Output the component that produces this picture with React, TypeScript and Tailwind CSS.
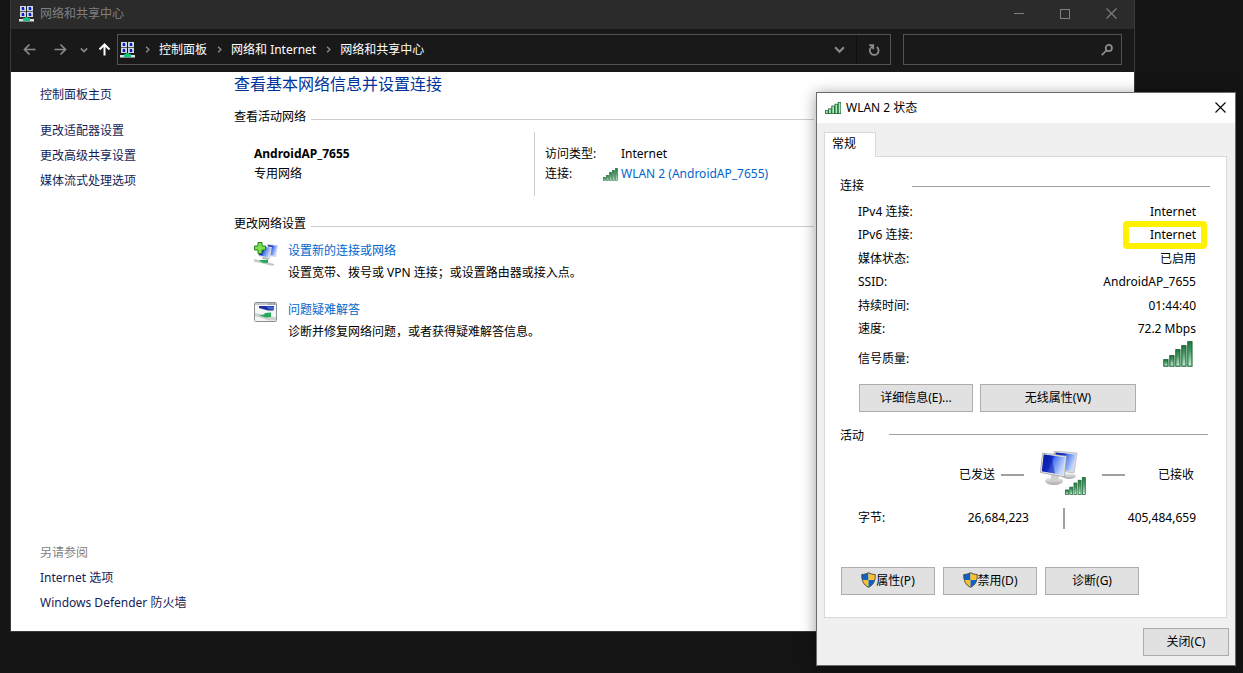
import React from 'react';
import clsx from 'clsx';

const SIDEBAR_LINKS = ['更改适配器设置', '更改高级共享设置', '媒体流式处理选项'];
const SEE_ALSO_LINKS = ['Internet 选项', 'Windows Defender 防火墙'];
const BREADCRUMBS = ['控制面板', '网络和 Internet', '网络和共享中心'];

const CONNECTION_ROWS = [
  { label: 'IPv4 连接:', value: 'Internet' },
  { label: 'IPv6 连接:', value: 'Internet', marked: true },
  { label: '媒体状态:', value: '已启用' },
  { label: 'SSID:', value: 'AndroidAP_7655' },
  { label: '持续时间:', value: '01:44:40' },
  { label: '速度:', value: '72.2 Mbps' },
];

const SIGNAL_BARS = [
  { x: 0, h: 8 },
  { x: 6, h: 12 },
  { x: 12, h: 18 },
  { x: 18, h: 22 },
  { x: 24, h: 26 },
];

/** Four small monitors on a green network cable. */
const NetworkCenterIcon: React.FC = () => (
  <svg
    width="15"
    height="16"
    viewBox="0 0 15 16"
    shapeRendering="crispEdges"
    className="shrink-0"
    aria-hidden="true"
  >
    {[
      [1, 0],
      [8, 0],
      [1, 6],
      [8, 6],
    ].map(([x, y]) => (
      <g key={`${x}-${y}`}>
        <rect x={x} y={y} width="6" height="5" fill="#d3d7dc" />
        <rect x={x + 1} y={y + 1} width="4" height="3" fill="#8fa4ee" />
        <rect x={x + 2} y={y + 1} width="2" height="3" fill="#0a1fc0" />
        <rect x={x + 4} y={y + 1} width="1" height="1" fill="#d3d7dc" />
      </g>
    ))}
    <rect x="1" y="5" width="6" height="1" fill="#565b61" />
    <rect x="8" y="5" width="6" height="1" fill="#565b61" />
    <rect x="6" y="11" width="3" height="2" fill="#0fae6a" />
    <rect x="0" y="13" width="15" height="2" fill="#dde0e3" />
    <rect x="4" y="12" width="7" height="3" fill="#12c47a" />
    <rect x="0" y="15" width="15" height="1" fill="#7d8387" />
  </svg>
);

const SignalIcon: React.FC<{
  width: number;
  height: number;
  flat?: boolean;
}> = ({ width, height, flat }) => (
  <svg
    width={width}
    height={height}
    viewBox="0 0 30 26"
    preserveAspectRatio="none"
    className="shrink-0"
    aria-hidden="true"
  >
    <defs>
      <linearGradient id="signal-bar" x1="0" y1="0" x2="0" y2="1">
        <stop offset="0" stopColor="#1f7a40" />
        <stop offset="0.4" stopColor="#4f9d69" />
        <stop offset="1" stopColor="#c4f3d2" />
      </linearGradient>
    </defs>
    {SIGNAL_BARS.map(({ x, h }) => (
      <rect
        key={x}
        x={x + 0.8}
        y={26.7 - h}
        width={flat ? 5 : 4.2}
        height={h - 1.5}
        fill={flat ? '#a9f0bd' : 'url(#signal-bar)'}
        stroke="#1d6437"
        strokeWidth={flat ? 1.7 : 1.1}
      />
    ))}
  </svg>
);

const ScreenDefs: React.FC = () => (
  <defs>
    <linearGradient id="screen" x1="0" y1="0" x2="1" y2="0.4">
      <stop offset="0" stopColor="#0717a0" />
      <stop offset="0.45" stopColor="#1230d8" />
      <stop offset="0.55" stopColor="#4f76f0" />
      <stop offset="1" stopColor="#c5d8ff" />
    </linearGradient>
    <linearGradient id="stand" x1="0" y1="0" x2="0" y2="1">
      <stop offset="0" stopColor="#f4f4f4" />
      <stop offset="1" stopColor="#a8a8a8" />
    </linearGradient>
  </defs>
);

/** Two tilted monitors, the adapter picture of the status dialog. */
const MonitorsIcon: React.FC = () => (
  <svg width="38" height="36" viewBox="0 0 38 36" aria-hidden="true">
    <ScreenDefs />
    <ellipse cx="29" cy="25" rx="7" ry="3" fill="url(#stand)" />
    <path d="M14 0 L37 2 L34 22 L14 19Z" fill="#dedede" stroke="#a6a6a6" strokeWidth="0.6" />
    <path d="M15.500 1.500 L35.500 3.500 L32.700 20.200 L16 18Z" fill="url(#screen)" />
    <ellipse cx="14" cy="30" rx="9" ry="4" fill="url(#stand)" />
    <path d="M11 22 L19 24 L18 30 L11 29Z" fill="#cfcfcf" />
    <path d="M2.500 2 L26.500 5 L24.500 26 L0.400 21.500Z" fill="#e2e2e2" stroke="#8f8f8f" strokeWidth="0.6" />
    <path d="M3.800 3.500 L25 6.300 L23 24 L1.900 20.200Z" fill="url(#screen)" />
    <path d="M3.800 3.500 L11 4.500 L15 22.500 L1.900 20.200Z" fill="#0b1da0" opacity="0.5" />
  </svg>
);

const NewConnectionIcon: React.FC = () => (
  <svg width="24" height="24" viewBox="0 0 24 24" className="mt-[2px] shrink-0" aria-hidden="true">
    <ScreenDefs />
    <path d="M13 2 L24 3 L22 15 L13 14Z" fill="#d4d8e6" />
    <path d="M14 3 L23 4 L21 13.500 L14 13Z" fill="url(#screen)" />
    <path d="M5 3 L18 5 L16 17 L4 14Z" fill="#d8d8d8" />
    <path d="M6 4 L17 6 L15 15.500 L5 13Z" fill="url(#screen)" />
    <path d="M9 15 L14 16 L15 18 L8 17Z" fill="#b6b6b6" />
    <path d="M0 17 L6 18.500 L20 22 L20 23.500 L17 23.500 L0 19.500Z" fill="#c3c8c4" />
    <path d="M5 18 L14 18 L14 21 L8 20.500Z" fill="#1fae55" />
    <path d="M4 0.500 H8 V4 H11.500 V8 H8 V11.500 H4 V8 H0.500 V4 H4Z" fill="#7be24f" stroke="#22851a" strokeWidth="1" />
  </svg>
);

const TroubleshootIcon: React.FC = () => (
  <svg width="24" height="22" viewBox="0 0 24 22" className="mt-[3px] shrink-0" aria-hidden="true">
    <rect x="0.500" y="0.500" width="22" height="19" rx="1" fill="#f4f6f8" stroke="#8b9096" />
    <rect x="1" y="1" width="21" height="2" fill="#c4c9cf" />
    <path d="M14.500 2h1.500M17 2h1.500M19.500 2h1.500" stroke="#5f6872" strokeWidth="1" />
    <path d="M5 4 L20 4 L19.500 8.500 L14 8.500 L5 6Z" fill="#1b2f9f" />
    <path d="M12 4.500 L20 4.500 L19.400 7.500 L15 7.500Z" fill="#4565d8" />
    <path d="M1 11 L6 12 L22 15.500 L22 18.500 L15 18.500 L1 14Z" fill="#ccd3cf" />
    <path d="M5 13.500 L10 12.500 L11 11 L17 10.500 L17 15 L12 15.500Z" fill="#25a956" />
  </svg>
);

const ShieldIcon: React.FC = () => (
  <svg width="15" height="16" viewBox="0 0 15 16" className="mb-[2px] shrink-0" aria-hidden="true">
    <clipPath id="shield">
      <path d="M7.500 0.500 C9.500 1.800 12 2.400 14.300 2.400 C14.600 8.500 12.500 13 7.500 15.500 C2.500 13 0.400 8.500 0.700 2.400 C3 2.400 5.500 1.800 7.500 0.500Z" />
    </clipPath>
    <g clipPath="url(#shield)">
      <rect width="7.500" height="8" fill="#0b63c4" />
      <rect x="7.500" width="7.500" height="8" fill="#fbc02f" />
      <rect y="8" width="7.500" height="8" fill="#fbc02f" />
      <rect x="7.500" y="8" width="7.500" height="8" fill="#0b63c4" />
    </g>
    <path
      d="M7.500 0.700 C9.500 1.900 12 2.500 14.200 2.500 C14.500 8.500 12.500 12.900 7.500 15.300 C2.500 12.900 0.500 8.500 0.800 2.500 C3 2.500 5.500 1.900 7.500 0.700Z"
      fill="none"
      stroke="#4d4d4d"
      strokeWidth="1"
    />
  </svg>
);

const ArrowIcon: React.FC<{ direction: 'left' | 'right' | 'up' }> = ({
  direction,
}) => (
  <svg
    width="13"
    height="13"
    viewBox="0 0 13 13"
    fill="none"
    stroke="currentColor"
    strokeWidth={direction === 'up' ? 2 : 1.7}
    className={clsx(
      direction === 'right' && 'rotate-180',
      direction === 'up' && 'rotate-90'
    )}
    aria-hidden="true"
  >
    <path d="M12.500 6.500H1.500M6.500 1.500L1.500 6.500L6.500 11.500" />
  </svg>
);

const ChevronIcon: React.FC<{ size: number; right?: boolean }> = ({
  size,
  right,
}) => (
  <svg
    width={size}
    height={size}
    viewBox="0 0 10 10"
    fill="none"
    stroke="currentColor"
    strokeWidth="2"
    className={clsx('shrink-0', right && '-rotate-90')}
    aria-hidden="true"
  >
    <path d="M1 3L5 7L9 3" />
  </svg>
);

const CloseIcon: React.FC = () => (
  <svg width="11" height="11" viewBox="0 0 11 11" stroke="currentColor" strokeWidth="1.1" aria-hidden="true">
    <path d="M0.500 0.500L10.500 10.500M10.500 0.500L0.500 10.500" />
  </svg>
);

const DialogButton: React.FC<{
  className?: string;
  children: React.ReactNode;
}> = ({ className, children }) => (
  <button
    type="button"
    className={clsx(
      'flex h-7 items-center justify-center border border-[#adadad] bg-[#e1e1e1] hover:border-[#0078d7] hover:bg-[#e5f1fb]',
      className
    )}
  >
    {children}
  </button>
);

const SectionTitle: React.FC<{ children: React.ReactNode }> = ({
  children,
}) => (
  <div className="flex items-center gap-[5px]">
    <h2>{children}</h2>
    <div className="mt-1 h-px flex-1 bg-[#cccccc]" />
  </div>
);

const TitleBar: React.FC = () => (
  <header className="flex h-[29px] items-start bg-[#2b2b2b] pl-2 text-[#808080]">
    <div className="flex h-[27px] flex-1 items-center gap-[6px]">
      <NetworkCenterIcon />
      <h1>网络和共享中心</h1>
    </div>
    <button type="button" aria-label="最小化" className="flex h-[27px] w-[46px] items-center justify-center">
      <span className="h-px w-[10px] bg-current" />
    </button>
    <button type="button" aria-label="最大化" className="flex h-[27px] w-[46px] items-center justify-center">
      <span className="h-[10px] w-[10px] border border-current" />
    </button>
    <button type="button" aria-label="关闭" className="flex h-[27px] w-[46px] items-center justify-center">
      <CloseIcon />
    </button>
  </header>
);

const AddressBar: React.FC = () => (
  <nav className="flex h-[43px] items-center bg-[#191919] px-3 pb-[2px] text-[#8a8a8a]">
    <div className="flex w-[94px] items-center justify-between pr-[6px]">
      <button type="button" aria-label="后退">
        <ArrowIcon direction="left" />
      </button>
      <button type="button" aria-label="前进" className="pl-2">
        <ArrowIcon direction="right" />
      </button>
      <button type="button" aria-label="最近的位置" className="pl-1">
        <ChevronIcon size={8} />
      </button>
      <button type="button" aria-label="向上" className="text-white">
        <ArrowIcon direction="up" />
      </button>
    </div>
    <div className="flex h-[31px] flex-1 items-center border border-[#535353] pl-[2px]">
      <NetworkCenterIcon />
      <ol className="flex flex-1 items-center">
        {BREADCRUMBS.map((crumb) => (
          <li key={crumb} className="flex items-center">
            <span className="flex w-6 justify-center">
              <ChevronIcon size={7} right />
            </span>
            <a href="#" className="text-white">
              {crumb}
            </a>
          </li>
        ))}
      </ol>
      <button type="button" aria-label="以前的位置" className="flex w-[34px] justify-center">
        <ChevronIcon size={11} />
      </button>
      <button
        type="button"
        aria-label="刷新"
        className="flex h-full w-[34px] items-center justify-center border-l border-[#111111]"
      >
        <svg width="12" height="12" viewBox="0 0 12 12" fill="none" stroke="currentColor" strokeWidth="1.8" aria-hidden="true">
          <path d="M8.800 3A4.400 4.400 0 1 1 4.800 2.400M1.200 1.200H5.200V5.200" />
        </svg>
      </button>
    </div>
    <div className="ml-3 flex h-[31px] w-[219px] items-center border border-[#535353] pr-2">
      <input type="search" aria-label="搜索控制面板" className="min-w-0 flex-1 bg-transparent px-2 text-white outline-none" />
      <svg width="12" height="12" viewBox="0 0 12 12" fill="none" stroke="currentColor" strokeWidth="1.8" aria-hidden="true">
        <circle cx="7.800" cy="4" r="3.100" />
        <path d="M5.500 6.300L0.700 11.200" />
      </svg>
    </div>
  </nav>
);

const Sidebar: React.FC = () => (
  <aside className="flex w-[223px] shrink-0 flex-col justify-between pt-[13px] pb-4 pl-[29px] text-[#151c55]">
    <div>
      <a href="#" className="block leading-5">
        控制面板主页
      </a>
      <ul className="mt-[13px]">
        {SIDEBAR_LINKS.map((link) => (
          <li key={link} className="leading-[25px]">
            <a href="#">{link}</a>
          </li>
        ))}
      </ul>
    </div>
    <div className="leading-[25px]">
      <h2 className="text-[#808080]">另请参阅</h2>
      <ul>
        {SEE_ALSO_LINKS.map((link) => (
          <li key={link}>
            <a href="#">{link}</a>
          </li>
        ))}
      </ul>
    </div>
  </aside>
);

const NetworkOverview: React.FC = () => (
  <main className="max-w-[580px] flex-1 leading-5">
    <p className="text-base leading-6 text-[#003399]">
      查看基本网络信息并设置连接
    </p>
    <div className="mt-[11px]">
      <SectionTitle>查看活动网络</SectionTitle>
    </div>
    <div className="mt-[5px] flex h-16 pl-5">
      <div className="w-[280px] pt-3">
        <p className="font-bold">AndroidAP_7655</p>
        <p>专用网络</p>
      </div>
      <dl className="grid grid-cols-[58px_1fr] content-start border-l border-[#cccccc] pt-3 pl-[10px]">
        <dt>访问类型:</dt>
        <dd className="pl-[18px]">Internet</dd>
        <dt>连接:</dt>
        <dd className="flex items-center gap-[3px]">
          <SignalIcon width={15} height={13} />
          <a href="#" className="text-[#0066cc]">
            WLAN 2 (AndroidAP_7655)
          </a>
        </dd>
      </dl>
    </div>
    <div className="mt-[18px]">
      <SectionTitle>更改网络设置</SectionTitle>
    </div>
    <ul className="mt-[6px] space-y-[15px] pl-5">
      <li className="flex gap-[10px]">
        <NewConnectionIcon />
        <div className="leading-[22px]">
          <a href="#" className="text-[#0066cc]">
            设置新的连接或网络
          </a>
          <p>设置宽带、拨号或 VPN 连接；或设置路由器或接入点。</p>
        </div>
      </li>
      <li className="flex gap-[10px]">
        <TroubleshootIcon />
        <div className="leading-[22px]">
          <a href="#" className="text-[#0066cc]">
            问题疑难解答
          </a>
          <p>诊断并修复网络问题，或者获得疑难解答信息。</p>
        </div>
      </li>
    </ul>
  </main>
);

const WlanStatusDialog: React.FC = () => (
  <section
    role="dialog"
    aria-labelledby="wlan-title"
    className="absolute top-[92px] right-[7px] w-[420px] border border-[#6b6b6b] bg-[#f0f0f0] shadow-[0_2px_14px_rgba(0,0,0,0.4)]"
  >
    <header className="flex h-[30px] items-center bg-white pr-[9px] pb-px pl-2">
      <SignalIcon width={16} height={12} flat />
      <h2 id="wlan-title" className="flex-1 pl-[5px]">
        WLAN 2 状态
      </h2>
      <button type="button" aria-label="关闭窗口">
        <CloseIcon />
      </button>
    </header>

    <div className="pt-[9px] pr-2 pb-[9px] pl-[7px]">
      <div role="tablist" className="flex">
        <button
          type="button"
          role="tab"
          aria-selected="true"
          className="relative z-10 -mb-px h-[25px] w-[52px] border border-b-0 border-[#d9d9d9] bg-white pr-3 pb-[2px]"
        >
          常规
        </button>
      </div>
      <div role="tabpanel" className="border border-[#d9d9d9] bg-white px-[15px] pt-[19px] pb-[22px]">
        <div className="flex items-center pr-px">
          <h3 className="w-[72px] leading-5">连接</h3>
          <div className="h-px flex-1 bg-[#a0a0a0]" />
        </div>
        <dl className="mt-[6px] pr-[15px] pl-[18px]">
          <div className="flex h-[137px] flex-col justify-between">
            {CONNECTION_ROWS.map(({ label, value, marked }) => (
              <div key={label} className="flex h-5 items-center justify-between">
                <dt>{label}</dt>
                <dd className="relative">
                  {value}
                  {marked && (
                    <span className="absolute -inset-y-[6px] -right-[11px] -left-[27px] rounded-sm border-[6px] border-[#fff200]" />
                  )}
                </dd>
              </div>
            ))}
          </div>
          <div className="flex h-10 items-center justify-between">
            <dt>信号质量:</dt>
            <dd className="pr-[3px] pb-[10px]">
              <SignalIcon width={30} height={26} />
            </dd>
          </div>
        </dl>
        <div className="mt-[5px] flex gap-[7px] pl-[19px]">
          <DialogButton className="w-[114px]">详细信息(E)...</DialogButton>
          <DialogButton className="w-[156px]">无线属性(W)</DialogButton>
        </div>

        <div className="mt-[10px] flex items-center pr-[3px]">
          <h3 className="w-[49px] pt-1 leading-5">活动</h3>
          <div className="h-px flex-1 bg-[#a0a0a0]" />
        </div>
        <div className="mt-[5px] flex h-12 items-center pr-[17px] pl-[119px]">
          <span className="pr-[6px]">已发送</span>
          <span className="h-[2px] w-[23px] bg-[#a0a0a0]" />
          <span className="relative mx-4 mb-1 h-[44px] w-[46px]">
            <MonitorsIcon />
            <span className="absolute right-0 bottom-0">
              <SignalIcon width={21} height={18} />
            </span>
          </span>
          <span className="h-[2px] w-[23px] bg-[#a0a0a0]" />
          <span className="flex-1 text-right">已接收</span>
        </div>
        <div className="mt-2 flex h-[22px] items-center pr-[15px] pl-[18px]">
          <span className="w-[60px]">字节:</span>
          <span className="w-[111px] text-right">26,684,223</span>
          <span className="ml-[34px] h-[21px] w-[2px] bg-[#a0a0a0]" />
          <span className="flex-1 text-right">405,484,659</span>
        </div>

        <div className="mt-[38px] flex gap-2 pl-px">
          <DialogButton className="w-[94px]">
            <ShieldIcon />
            属性(P)
          </DialogButton>
          <DialogButton className="w-[94px]">
            <ShieldIcon />
            禁用(D)
          </DialogButton>
          <DialogButton className="w-[94px]">诊断(G)</DialogButton>
        </div>
      </div>
      <div className="-mr-[2px] mt-[10px] flex justify-end">
        <DialogButton className="w-[86px]">关闭(C)</DialogButton>
      </div>
    </div>
  </section>
);

export default function App() {
  return (
    <div className="relative flex min-h-screen bg-[#141414] pr-[108px] pb-[41px] pl-[10px] font-['Noto_Sans','Noto_Sans_CJK_SC',sans-serif] text-xs text-black">
      <div className="flex flex-1 flex-col border border-t-0 border-[#3a3a3a] bg-white">
        <TitleBar />
        <AddressBar />
        <div className="flex flex-1">
          <Sidebar />
          <NetworkOverview />
        </div>
      </div>
      <WlanStatusDialog />
    </div>
  );
}
